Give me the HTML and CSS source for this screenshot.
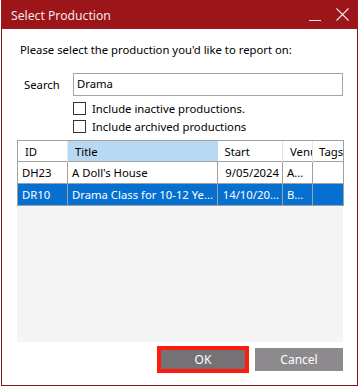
FILE: index.html
```html
<!DOCTYPE html>
<html lang="en">

<head>
    <meta charset="UTF-8">
    <title>Select Production</title>
    <link rel="stylesheet" href="styles.css">
</head>

<body>
    <div class="window">
        <div class="titlebar">
            <span class="caption">Select Production</span>
            <span class="min-btn"></span>
            <svg class="close-btn" width="13" height="13" viewBox="0 0 13 13">
                <path d="M0.5 0.5 L12.5 12.5 M12.5 0.5 L0.5 12.5" stroke="#f4e6e6" stroke-width="1.1" fill="none"/>
            </svg>
        </div>

        <div class="content">
            <p class="intro">Please select the production you'd like to report on:</p>

            <div class="search-row">
                <label class="search-label">Search</label>
                <div class="search-box">Drama</div>
            </div>

            <div class="options">
                <div class="option"><span class="check"></span>Include inactive productions.</div>
                <div class="option"><span class="check"></span>Include archived productions</div>
            </div>

            <!-- production list -->
            <div class="list">
                <table class="grid">
                    <colgroup>
                        <col class="c-id">
                        <col class="c-title">
                        <col class="c-start">
                        <col class="c-venue">
                        <col class="c-tags">
                    </colgroup>
                    <thead>
                        <tr>
                            <th>ID</th>
                            <th class="sorted">Title</th>
                            <th>Start</th>
                            <th>Venue</th>
                            <th>Tags</th>
                        </tr>
                    </thead>
                    <tbody>
                        <tr>
                            <td>DH23</td>
                            <td>A Doll's House</td>
                            <td class="date">9/05/2024</td>
                            <td>A...</td>
                            <td></td>
                        </tr>
                        <tr class="selected">
                            <td>DR10</td>
                            <td>Drama Class for 10-12 Ye...</td>
                            <td class="date">14/10/20...</td>
                            <td>B...</td>
                            <td></td>
                        </tr>
                    </tbody>
                </table>
            </div>

            <div class="buttons">
                <button class="btn ok">OK</button>
                <button class="btn cancel">Cancel</button>
            </div>
        </div>
    </div>
</body>

</html>
```

FILE: styles.css
```css
body {
    margin: 0;
    padding: 0;
    background: #ffffff;
    font-family: "Segoe UI", "Noto Sans", sans-serif;
    font-size: 11.3px;
    color: #000000;
}

/* dialog frame */
.window {
    margin-left: 1px;
    width: 355px;
    height: 385px;
    border: 1px solid #7d1a1c;
    border-top: none;
    background: #ffffff;
}

.titlebar {
    display: flex;
    align-items: center;
    height: 29px;
    margin: 0 -1px;
    padding-left: 10px;
    background: #9b1519;
    color: #f4e6e6;
}

.caption {
    flex: 1;
    font-size: 12.2px;
    padding-top: 1px;
}

.min-btn {
    width: 12px;
    height: 1px;
    margin-top: 12px;
    background: #f4e6e6;
}

.close-btn {
    margin: 0 9px 0 15px;
}

.content {
    padding: 13px 14px 0 15px;
}

.intro {
    margin: 0 0 15px 0;
    padding-left: 3px;
    line-height: 16px;
}

/* search field */
.search-row {
    display: flex;
    align-items: center;
}

.search-label {
    width: 56px;
    padding-left: 7px;
    box-sizing: border-box;
}

.search-box {
    flex: 1;
    height: 23px;
    box-sizing: border-box;
    border: 1px solid #a5a5a5;
    padding-left: 3px;
    line-height: 20px;
}

.options {
    padding: 3px 0 0 56px;
}

.option {
    display: flex;
    align-items: center;
    height: 18px;
}

.check {
    width: 13px;
    height: 13px;
    box-sizing: border-box;
    border: 1px solid #333333;
    margin-right: 6px;
    background: #ffffff;
}

/* list view */
.list {
    margin-top: 5px;
    height: 202px;
    background: #f4f4f4;
}

.grid {
    width: 326px;
    table-layout: fixed;
    border-collapse: collapse;
    background: #ffffff;
}

.c-id { width: 50px; }
.c-title { width: 150px; }
.c-start { width: 65px; }
.c-venue { width: 30px; }
.c-tags { width: 31px; }

.grid th,
.grid td {
    white-space: nowrap;
    overflow: hidden;
    font-weight: normal;
    text-align: left;
    padding: 0 0 0 4px;
}

.grid th {
    height: 20px;
    border-top: 1px solid #a0a0a0;
    border-left: 1px solid #e5e5e5;
    padding-left: 7px;
}

.grid th:first-child {
    border-left: 1px solid #a0a0a0;
}

.grid th:last-child {
    border-right: 1px solid #a0a0a0;
    padding-left: 6px;
}

.grid th.sorted {
    background: #b8d9f3;
}

.grid th.sorted + th {
    border-left: none;
}

.grid td {
    height: 21px;
    border: 1px solid #a0a0a0;
}

.grid td.date {
    text-align: right;
    padding: 0 3px 0 0;
}

.grid tr.selected td {
    background: #0670d0;
    color: #ffffff;
}

/* dialog buttons */
.buttons {
    display: flex;
    justify-content: flex-end;
    gap: 8px;
    margin-top: 6px;
}

.btn {
    width: 88px;
    height: 23px;
    border: none;
    padding: 0;
    font-family: "Segoe UI", "Noto Sans", sans-serif;
    font-size: 12px;
    color: #ffffff;
}

.btn.ok {
    background: #747274;
    outline: 4px solid #ff1a0e;
    outline-offset: -2px;
}

.btn.cancel {
    background: #8c8a8c;
}
```
